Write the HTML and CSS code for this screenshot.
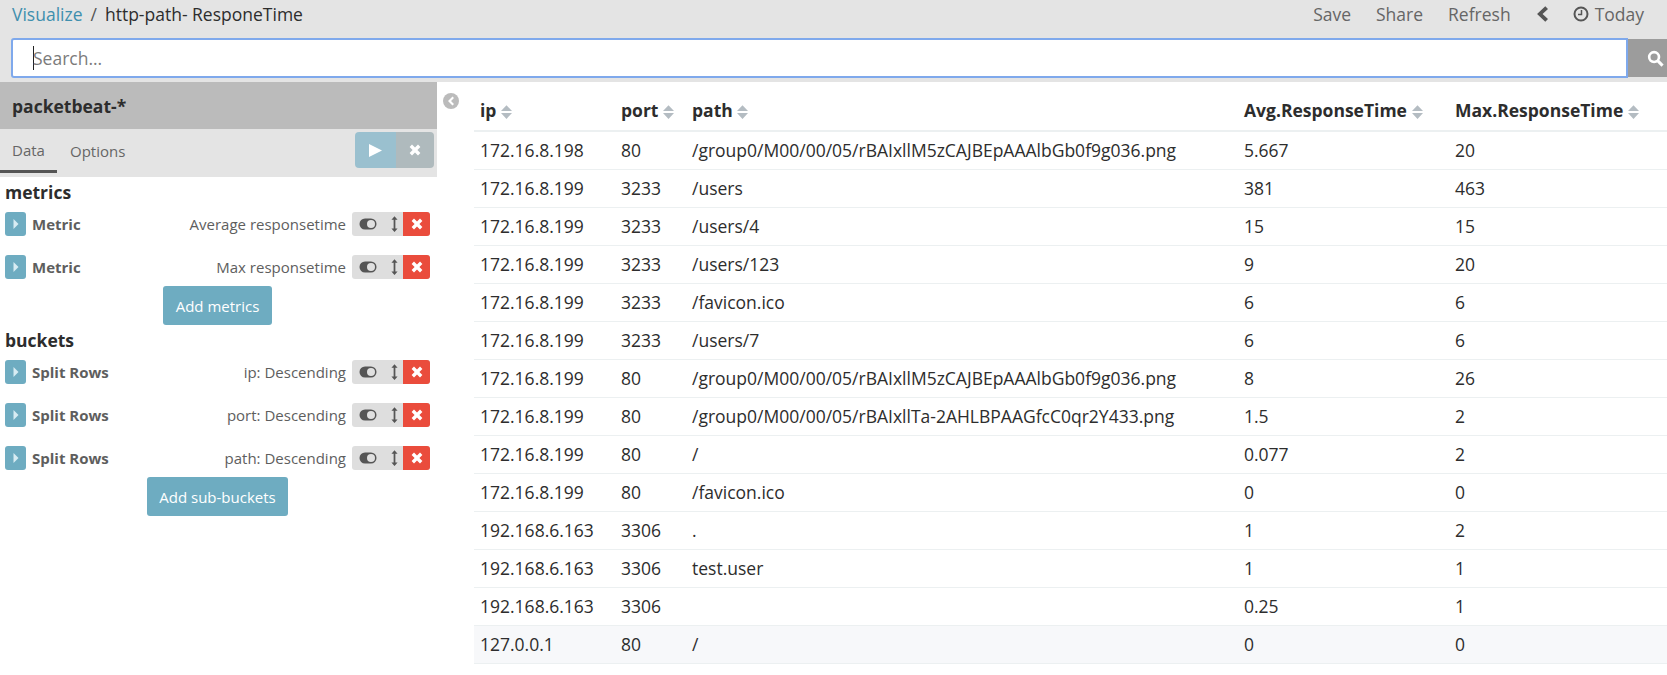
FILE: index.html
```html
<!DOCTYPE html>
<html lang="en">

<head>
    <meta charset="UTF-8">
    <title>http-path- ResponeTime</title>
    <link rel="stylesheet" href="styles.css">
</head>

<body>
    <svg class="icon-defs" width="0" height="0">
        <symbol id="i-toggle" viewBox="0 0 18 12">
            <rect x="0.5" y="0.5" width="17" height="11" rx="5.5" fill="#555"/>
            <circle cx="12" cy="6" r="4" fill="#e0e0e0"/>
        </symbol>
        <symbol id="i-arrows" viewBox="0 0 8 18">
            <path d="M4 0 7.5 4H5v10h2.5L4 18 .5 14H3V4H.5z" fill="#555"/>
        </symbol>
        <symbol id="i-x" viewBox="0 0 12 12">
            <path d="M3 .6 6 3.6 9 .6 11.4 3 8.4 6 11.4 9 9 11.4 6 8.4 3 11.4 .6 9 3.6 6 .6 3z" fill="#fff"/>
        </symbol>
        <symbol id="i-caret" viewBox="0 0 6 10">
            <path d="M.5 0 5.5 5 .5 10z" fill="#d8ecf3"/>
        </symbol>
        <symbol id="i-sort" viewBox="0 0 12 15">
            <path d="M6 0 12 6.500H0zM0 8.500H12L6 15z" fill="#b4bcc2"/>
        </symbol>
    </svg>

    <header class="topbar">
        <div class="nav-row">
            <div class="crumbs">
                <a href="" class="crumb-link">Visualize</a>
                <span class="crumb-sep">/</span>
                <span>http-path- ResponeTime</span>
            </div>
            <nav class="nav-actions">
                <a href="">Save</a>
                <a href="">Share</a>
                <a href="">Refresh</a>
                <svg class="nav-chevron" viewBox="0 0 11 14"><path d="M8.500 0 11 2.500 6 7l5 4.500L8.500 14 1 7z" fill="#555"/></svg>
                <span class="nav-time">
                    <svg class="nav-clock" viewBox="0 0 16 16"><circle cx="8" cy="8" r="6.500" fill="none" stroke="#555" stroke-width="2"/><path d="M8.500 4v4.500H5" fill="none" stroke="#555" stroke-width="1.500"/></svg>
                    Today
                </span>
            </nav>
        </div>
        <form class="search-row">
            <div class="search-input"><span class="caret"></span>Search...</div>
            <button type="button" class="search-btn">
                <svg viewBox="0 0 18 18" width="17" height="17"><circle cx="7.500" cy="7.500" r="5.200" fill="none" stroke="#fff" stroke-width="2.800"/><path d="M11.500 11.500 16.500 16.500" stroke="#fff" stroke-width="3.200"/></svg>
            </button>
        </form>
    </header>

    <main class="content">
        <aside class="sidebar">
            <div class="index-title">packetbeat-*</div>
            <div class="tabs">
                <a href="" class="tab tab-active">Data</a>
                <a href="" class="tab">Options</a>
                <div class="apply-group">
                    <button type="button" class="apply-btn"><svg viewBox="0 0 13 13" width="13" height="13"><path d="M0 0 13 6.500 0 13z" fill="#fff"/></svg></button>
                    <button type="button" class="discard-btn"><svg width="12" height="12"><use href="#i-x"/></svg></button>
                </div>
            </div>

            <section class="agg-section">
                <h2>metrics</h2>
                <div class="agg-row">
                    <button type="button" class="agg-toggle"><svg width="6" height="10"><use href="#i-caret"/></svg></button>
                    <b>Metric</b>
                    <span class="agg-desc">Average responsetime</span>
                    <div class="agg-controls">
                        <span class="ctl"><svg width="18" height="12"><use href="#i-toggle"/></svg></span>
                        <span class="ctl ctl-move"><svg width="7" height="16"><use href="#i-arrows"/></svg></span>
                        <span class="ctl ctl-remove"><svg width="12" height="12"><use href="#i-x"/></svg></span>
                    </div>
                </div>
                <div class="agg-row">
                    <button type="button" class="agg-toggle"><svg width="6" height="10"><use href="#i-caret"/></svg></button>
                    <b>Metric</b>
                    <span class="agg-desc">Max responsetime</span>
                    <div class="agg-controls">
                        <span class="ctl"><svg width="18" height="12"><use href="#i-toggle"/></svg></span>
                        <span class="ctl ctl-move"><svg width="7" height="16"><use href="#i-arrows"/></svg></span>
                        <span class="ctl ctl-remove"><svg width="12" height="12"><use href="#i-x"/></svg></span>
                    </div>
                </div>
                <button type="button" class="add-btn add-metrics">Add metrics</button>
            </section>

            <section class="agg-section">
                <h2>buckets</h2>
                <div class="agg-row">
                    <button type="button" class="agg-toggle"><svg width="6" height="10"><use href="#i-caret"/></svg></button>
                    <b>Split Rows</b>
                    <span class="agg-desc">ip: Descending</span>
                    <div class="agg-controls">
                        <span class="ctl"><svg width="18" height="12"><use href="#i-toggle"/></svg></span>
                        <span class="ctl ctl-move"><svg width="7" height="16"><use href="#i-arrows"/></svg></span>
                        <span class="ctl ctl-remove"><svg width="12" height="12"><use href="#i-x"/></svg></span>
                    </div>
                </div>
                <div class="agg-row">
                    <button type="button" class="agg-toggle"><svg width="6" height="10"><use href="#i-caret"/></svg></button>
                    <b>Split Rows</b>
                    <span class="agg-desc">port: Descending</span>
                    <div class="agg-controls">
                        <span class="ctl"><svg width="18" height="12"><use href="#i-toggle"/></svg></span>
                        <span class="ctl ctl-move"><svg width="7" height="16"><use href="#i-arrows"/></svg></span>
                        <span class="ctl ctl-remove"><svg width="12" height="12"><use href="#i-x"/></svg></span>
                    </div>
                </div>
                <div class="agg-row">
                    <button type="button" class="agg-toggle"><svg width="6" height="10"><use href="#i-caret"/></svg></button>
                    <b>Split Rows</b>
                    <span class="agg-desc">path: Descending</span>
                    <div class="agg-controls">
                        <span class="ctl"><svg width="18" height="12"><use href="#i-toggle"/></svg></span>
                        <span class="ctl ctl-move"><svg width="7" height="16"><use href="#i-arrows"/></svg></span>
                        <span class="ctl ctl-remove"><svg width="12" height="12"><use href="#i-x"/></svg></span>
                    </div>
                </div>
                <button type="button" class="add-btn add-buckets">Add sub-buckets</button>
            </section>
        </aside>

        <div class="collapse-col">
            <svg class="collapse-icon" viewBox="0 0 16 16"><circle cx="8" cy="8" r="8" fill="#bbb"/><path d="M9.500 3.500 11 5 8 8l3 3-1.500 1.500L5 8z" fill="#fff"/></svg>
        </div>

        <div class="results">
            <table class="data-table">
                <colgroup>
                    <col class="col-ip">
                    <col class="col-port">
                    <col class="col-path">
                    <col class="col-avg">
                    <col class="col-max">
                </colgroup>
                <thead>
                    <tr>
                        <th>ip <svg class="sort" width="11" height="14"><use href="#i-sort"/></svg></th>
                        <th>port <svg class="sort" width="11" height="14"><use href="#i-sort"/></svg></th>
                        <th>path <svg class="sort" width="11" height="14"><use href="#i-sort"/></svg></th>
                        <th>Avg.ResponseTime <svg class="sort" width="11" height="14"><use href="#i-sort"/></svg></th>
                        <th>Max.ResponseTime <svg class="sort" width="11" height="14"><use href="#i-sort"/></svg></th>
                    </tr>
                </thead>
                <tbody>
                    <tr><td>172.16.8.198</td><td>80</td><td>/group0/M00/00/05/rBAIxllM5zCAJBEpAAAlbGb0f9g036.png</td><td>5.667</td><td>20</td></tr>
                    <tr><td>172.16.8.199</td><td>3233</td><td>/users</td><td>381</td><td>463</td></tr>
                    <tr><td>172.16.8.199</td><td>3233</td><td>/users/4</td><td>15</td><td>15</td></tr>
                    <tr><td>172.16.8.199</td><td>3233</td><td>/users/123</td><td>9</td><td>20</td></tr>
                    <tr><td>172.16.8.199</td><td>3233</td><td>/favicon.ico</td><td>6</td><td>6</td></tr>
                    <tr><td>172.16.8.199</td><td>3233</td><td>/users/7</td><td>6</td><td>6</td></tr>
                    <tr><td>172.16.8.199</td><td>80</td><td>/group0/M00/00/05/rBAIxllM5zCAJBEpAAAlbGb0f9g036.png</td><td>8</td><td>26</td></tr>
                    <tr><td>172.16.8.199</td><td>80</td><td>/group0/M00/00/05/rBAIxllTa-2AHLBPAAGfcC0qr2Y433.png</td><td>1.5</td><td>2</td></tr>
                    <tr><td>172.16.8.199</td><td>80</td><td>/</td><td>0.077</td><td>2</td></tr>
                    <tr><td>172.16.8.199</td><td>80</td><td>/favicon.ico</td><td>0</td><td>0</td></tr>
                    <tr><td>192.168.6.163</td><td>3306</td><td>.</td><td>1</td><td>2</td></tr>
                    <tr><td>192.168.6.163</td><td>3306</td><td>test.user</td><td>1</td><td>1</td></tr>
                    <tr><td>192.168.6.163</td><td>3306</td><td></td><td>0.25</td><td>1</td></tr>
                    <tr class="row-hover"><td>127.0.0.1</td><td>80</td><td>/</td><td>0</td><td>0</td></tr>
                </tbody>
            </table>
        </div>
    </main>
</body>

</html>
```

FILE: styles.css
```css
* {
    box-sizing: border-box;
}

html,
body {
    height: 100%;
}

body {
    margin: 0;
    overflow: hidden;
    background-color: #fff;
    color: #2d2d2d;
    font-family: "Open Sans", "Liberation Sans", sans-serif;
    font-size: 16px;
}

a {
    color: inherit;
    text-decoration: none;
}

button {
    border: none;
    padding: 0;
    font-family: inherit;
    cursor: pointer;
}

.icon-defs {
    display: block;
    height: 0;
}

/* top bar */
.topbar {
    height: 82px;
    background-color: #e4e4e4;
}

.nav-row {
    display: flex;
    align-items: center;
    justify-content: space-between;
    height: 38px;
    padding: 0 23px 10px 12px;
    font-size: 17.500px;
}

.crumbs {
    display: flex;
    gap: 8px;
}

.crumb-link {
    color: #3f8fae;
}

.crumb-sep {
    color: #555;
}

.nav-actions {
    display: flex;
    align-items: center;
    color: #666;
}

.nav-actions a {
    margin-right: 25px;
}

.nav-chevron {
    width: 12px;
    height: 16px;
    margin-right: 25px;
}

.nav-time {
    display: flex;
    align-items: center;
    gap: 6px;
}

.nav-clock {
    width: 16px;
    height: 16px;
}

.search-row {
    display: flex;
    margin: 0;
    padding-left: 11px;
}

.search-input {
    display: flex;
    align-items: center;
    flex: 1;
    height: 40px;
    padding-left: 20px;
    border: 2px solid #7fa9ec;
    border-radius: 3px 0 0 3px;
    background-color: #fff;
    color: #7b7b7b;
    font-size: 17.500px;
}

.caret {
    width: 1px;
    height: 24px;
    margin-right: -1px;
    background-color: #222;
}

.search-btn {
    display: flex;
    align-items: center;
    justify-content: center;
    width: 39px;
    height: 38px;
    margin-top: 1px;
    padding-left: 15px;
    background-color: #9c9c9c;
}

/* content area */
.content {
    display: flex;
    height: calc(100% - 82px);
}

.sidebar {
    flex: none;
    width: 437px;
}

.index-title {
    display: flex;
    align-items: center;
    height: 47px;
    padding-left: 12px;
    background-color: #bbb;
    font-size: 17.500px;
    font-weight: 700;
}

.tabs {
    display: flex;
    align-items: flex-start;
    height: 48px;
    background-color: #e4e4e4;
    color: #666;
    font-size: 15px;
}

.tab {
    display: flex;
    align-items: center;
    height: 44px;
    padding: 0 12px;
    margin-right: 1px;
}

.tab-active {
    width: 57px;
    border-bottom: 3px solid #555;
}

.apply-group {
    display: flex;
    margin: 3px 3px 0 auto;
}

.apply-btn,
.discard-btn {
    display: flex;
    align-items: center;
    justify-content: center;
    height: 36px;
}

.apply-btn {
    width: 41px;
    border-radius: 4px 0 0 4px;
    background-color: #9ac0cf;
}

.discard-btn {
    width: 38px;
    border-radius: 0 4px 4px 0;
    background-color: #afbabd;
}

.agg-section {
    display: flex;
    flex-direction: column;
    padding: 0 7px 0 5px;
}

.agg-section h2 {
    margin: 3px 0 8px 0;
    font-size: 17.500px;
    font-weight: 700;
    line-height: 24px;
}

.agg-row {
    display: flex;
    align-items: center;
    height: 24px;
    margin-bottom: 19px;
    color: #5e5e5e;
    font-size: 15px;
}

.agg-row b {
    margin-left: 6px;
    font-size: 15px;
}

.agg-toggle {
    display: flex;
    align-items: center;
    justify-content: center;
    width: 21px;
    height: 24px;
    border-radius: 3px;
    background-color: #6eacc1;
}

.agg-desc {
    margin: 0 6px 0 auto;
}

.agg-controls {
    display: flex;
    width: 78px;
    height: 24px;
    border-radius: 3px;
    overflow: hidden;
    background-color: #dedede;
}

.ctl {
    display: flex;
    align-items: center;
    justify-content: center;
    padding-left: 7px;
}

.ctl-move {
    width: 26px;
    padding-left: 8px;
}

.ctl-remove {
    flex: none;
    width: 27px;
    padding-left: 0;
    margin-left: auto;
    background-color: #ea4c3c;
}

.add-btn {
    align-self: center;
    height: 39px;
    border-radius: 3px;
    background-color: #6eacc1;
    color: #fff;
    font-size: 15px;
}

.add-metrics {
    width: 109px;
    margin-top: -12px;
}

.add-buckets {
    width: 141px;
    margin-top: -12px;
}

.collapse-col {
    flex: none;
    width: 37px;
    padding: 11px 0 0 6px;
}

.collapse-icon {
    display: block;
    width: 16px;
    height: 16px;
}

/* results table */
.results {
    flex: 1;
}

.data-table {
    width: 100%;
    border-collapse: collapse;
    table-layout: fixed;
    font-size: 17.500px;
}

.col-ip {
    width: 140px;
}

.col-port {
    width: 71px;
}

.col-path {
    width: 552px;
}

.col-avg {
    width: 211px;
}

.data-table th,
.data-table td {
    padding: 0 7px;
    text-align: left;
    white-space: nowrap;
}

.data-table th:first-child,
.data-table td:first-child {
    padding-left: 6px;
}

.data-table th {
    height: 49px;
    padding-top: 8px;
    border-bottom: 2px solid #ecf0f1;
    font-weight: 700;
}

.data-table td {
    height: 38px;
    border-bottom: 1px solid #ecf0f1;
}

.sort {
    vertical-align: -2px;
}

.row-hover {
    background-color: #f7f8fa;
}
```
